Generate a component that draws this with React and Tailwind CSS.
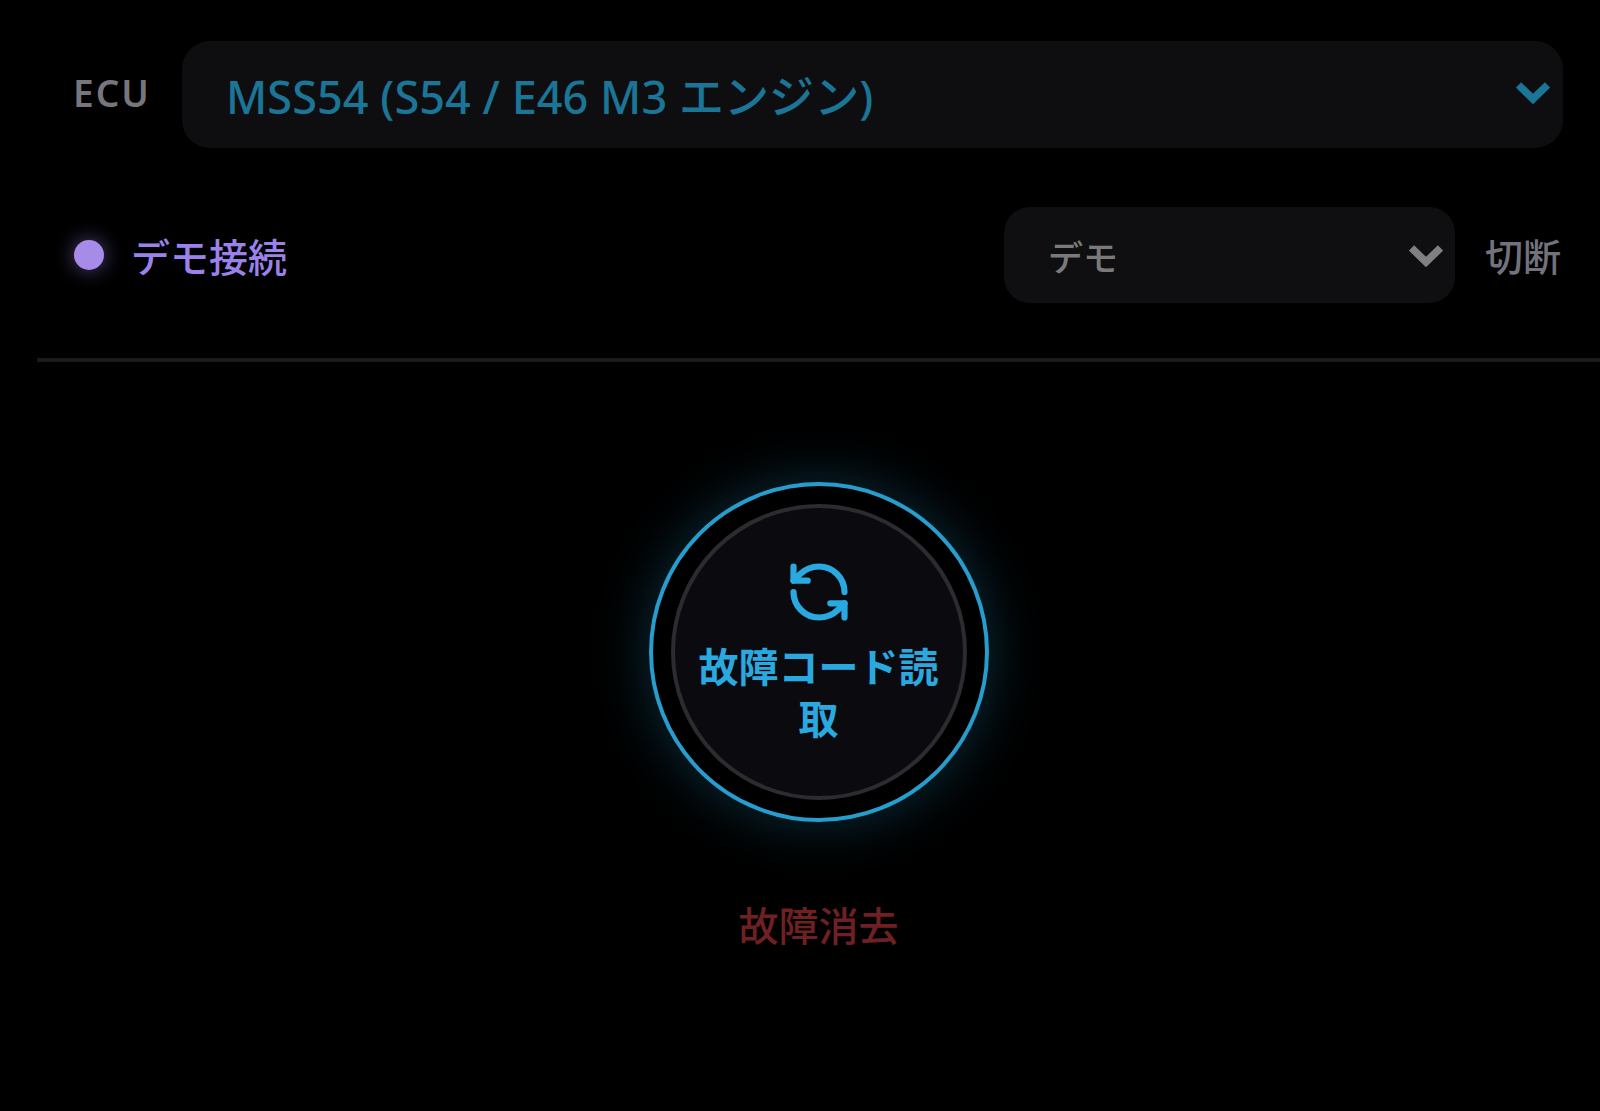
import { RefreshCcw } from "lucide-react";

const Chevron = ({ className }) => (
  <svg viewBox="0 0 34 22" className={className} fill="none" stroke="currentColor" strokeWidth="7.5">
    <path d="M2.5 3 L17 17 L31.5 3" />
  </svg>
);

export default function App() {
  return (
    <div className="min-h-screen bg-black pt-[41px] [font-family:'Noto_Sans','Noto_Sans_CJK_JP',sans-serif]">
      <div className="flex items-center pl-[73px] pr-[37px]">
        <span className="w-[109px] shrink-0 text-[37px] leading-none font-semibold tracking-[2px] text-[#76767c] -mt-[5px]">ECU</span>
        <button className="flex h-[107px] flex-1 items-center justify-between rounded-[28px] bg-[#0e0e10] pl-[44px] pr-[13px]">
          <span className="text-[45px] leading-none font-medium tracking-[0.05px] text-[#1a7596] mt-[4px]">MSS54 (S54 / E46 M3 エンジン)</span>
          <Chevron className="mb-[4px] h-[22px] w-[34px] text-[#1a7596]" />
        </button>
      </div>

      <div className="mt-[59px] flex items-center pl-[74px] pr-[39px]">
        <span className="h-[30px] w-[30px] shrink-0 rounded-full bg-[#a78be8] shadow-[0_0_20px_rgba(167,139,250,0.5)]" />
        <span className="ml-[27px] mt-[2px] text-[39px] leading-none font-medium text-[#9a82ea]">デモ接続</span>
        <button className="ml-auto flex h-[96px] w-[451px] items-center justify-between rounded-[26px] bg-[#0f0f11] pl-[44px] pr-[12px]">
          <span className="mt-[4px] text-[35px] leading-none font-medium text-[#7a7a7a]">デモ</span>
          <Chevron className="mt-[2px] h-[22px] w-[34px] text-[#808080]" />
        </button>
        <span className="ml-[30px] mt-[2px] text-[38px] leading-none font-medium text-[#72727c]">切断</span>
      </div>

      <div className="mt-[55px] ml-[37px] h-[4px] bg-[#1a1a1c]" />

      <div className="flex flex-col items-center pt-[120px] pl-[37px]">
        <div className="flex h-[340px] w-[340px] items-center justify-center rounded-full border-[4px] border-[#279dce] shadow-[0_0_56px_rgba(39,165,218,0.28)]">
          <button className="flex h-[296px] w-[296px] flex-col items-center justify-center rounded-full border-[4px] border-[#2c2c30] bg-[#0b0b0f] px-5 text-[#2aa9e0]">
            <RefreshCcw size={68} strokeWidth={2.2} className="-mt-[1px]" />
            <span className="mt-[15px] text-center text-[40px] leading-[52px] font-bold">故障コード読取</span>
          </button>
        </div>
        <button className="mt-[84px] text-[40px] leading-none font-medium text-[#6f2022]">故障消去</button>
      </div>
    </div>
  );
}
